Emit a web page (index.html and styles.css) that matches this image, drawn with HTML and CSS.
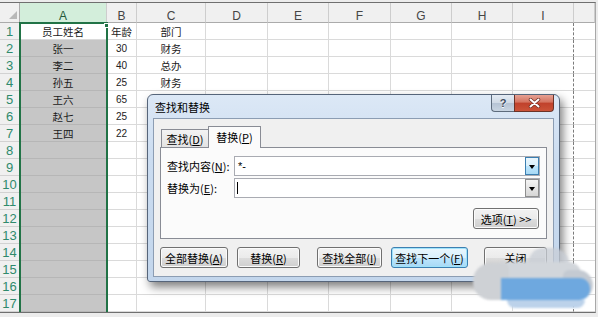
FILE: index.html
```html
<!DOCTYPE html>
<html lang="zh-CN">
<head>
<meta charset="utf-8">
<title>查找和替换</title>
<link rel="stylesheet" href="styles.css">
</head>
<body>
<div class="screen">
  <div class="sheet">
    <div class="grid">
      <div class="corner"><span class="tri"></span></div><div class="selh">A</div><div>B</div><div>C</div><div>D</div><div>E</div><div>F</div><div>G</div><div>H</div><div>I</div><div></div>
      <div>1</div><div>员工姓名</div><div>年龄</div><div>部门</div><div></div><div></div><div></div><div></div><div></div><div></div><div></div>
      <div>2</div><div>张一</div><div class="num">30</div><div>财务</div><div></div><div></div><div></div><div></div><div></div><div></div><div></div>
      <div>3</div><div>李二</div><div class="num">40</div><div>总办</div><div></div><div></div><div></div><div></div><div></div><div></div><div></div>
      <div>4</div><div>孙五</div><div class="num">25</div><div>财务</div><div></div><div></div><div></div><div></div><div></div><div></div><div></div>
      <div>5</div><div>王六</div><div class="num">65</div><div></div><div></div><div></div><div></div><div></div><div></div><div></div><div></div>
      <div>6</div><div>赵七</div><div class="num">25</div><div></div><div></div><div></div><div></div><div></div><div></div><div></div><div></div>
      <div>7</div><div>王四</div><div class="num">22</div><div></div><div></div><div></div><div></div><div></div><div></div><div></div><div></div>
      <div>8</div><div></div><div></div><div></div><div></div><div></div><div></div><div></div><div></div><div></div><div></div>
      <div>9</div><div></div><div></div><div></div><div></div><div></div><div></div><div></div><div></div><div></div><div></div>
      <div>10</div><div></div><div></div><div></div><div></div><div></div><div></div><div></div><div></div><div></div><div></div>
      <div>11</div><div></div><div></div><div></div><div></div><div></div><div></div><div></div><div></div><div></div><div></div>
      <div>12</div><div></div><div></div><div></div><div></div><div></div><div></div><div></div><div></div><div></div><div></div>
      <div>13</div><div></div><div></div><div></div><div></div><div></div><div></div><div></div><div></div><div></div><div></div>
      <div>14</div><div></div><div></div><div></div><div></div><div></div><div></div><div></div><div></div><div></div><div></div>
      <div>15</div><div></div><div></div><div></div><div></div><div></div><div></div><div></div><div></div><div></div><div></div>
      <div>16</div><div></div><div></div><div></div><div></div><div></div><div></div><div></div><div></div><div></div><div></div>
      <div>17</div><div></div><div></div><div></div><div></div><div></div><div></div><div></div><div></div><div></div><div></div>
    </div>
    <div class="selbox"><span class="handle"></span></div>

    <div class="dialog">
      <div class="titlebar">
        <div class="title">查找和替换</div>
        <div class="caps">
          <div class="cap help">?</div>
          <div class="cap close">
            <svg width="13" height="10" viewBox="0 0 13 10"><path d="M2.5 1.5 L10.5 8.5 M10.5 1.5 L2.5 8.5" stroke="#6b2a20" stroke-width="3.4" stroke-linecap="round"/><path d="M2.5 1.5 L10.5 8.5 M10.5 1.5 L2.5 8.5" stroke="#fff" stroke-width="2" stroke-linecap="round"/></svg>
          </div>
        </div>
      </div>
      <div class="panel">
        <div class="tabs">
          <div class="tab">查找(<u>D</u>)</div>
          <div class="tab active">替换(<u>P</u>)</div>
        </div>
        <div class="tabbody">
          <div class="field">
            <div class="label">查找内容(<u>N</u>):</div>
            <div class="combo"><span class="val">*-</span><span class="drop hot"><i></i></span></div>
          </div>
          <div class="field second">
            <div class="label">替换为(<u>E</u>):</div>
            <div class="combo"><span class="caret"></span><span class="drop"><i></i></span></div>
          </div>
          <div class="optrow"><div class="btn btn-opt">选项(<u>T</u>) &gt;&gt;</div></div>
        </div>
        <div class="actions">
          <div class="btn btn-all">全部替换(<u>A</u>)</div>
          <div class="btn btn-rep">替换(<u>R</u>)</div>
          <div class="btn btn-findall">查找全部(<u>I</u>)</div>
          <div class="btn btn-next">查找下一个(<u>F</u>)</div>
          <div class="btn btn-close">关闭</div>
        </div>
      </div>
    </div>
  </div>

  <div class="wm">
    <span class="wm-top"></span>
    <span class="wm-mid"></span>
    <span class="wm-left"></span>
    <span class="wm-right"></span>
    <span class="wm-blue"></span>
    <span class="wm-low"></span>
  </div>
</div>
</body>
</html>
```

FILE: styles.css
```css
html, body { margin: 0; padding: 0; }
body { width: 598px; height: 317px; overflow: hidden; background: #ececec; }

.screen {
  position: relative;
  width: 598px;
  height: 317px;
  padding-top: 2px;
  box-sizing: border-box;
  background: #ececec;
}

.sheet {
  position: relative;
  width: 596px;
  height: 311px;
  box-sizing: border-box;
  border-top: 1px solid #6f6f6f;
  border-right: 1px solid #a8a8a8;
  border-bottom: 1px solid #6f6f6f;
  background: #fff;
  overflow: hidden;
}

.grid {
  display: grid;
  grid-template-columns: 20px 87px 30px 69px 62px 61px 62px 61px 61px 61px 1fr;
  grid-template-rows: 20px repeat(17, 17px);
}

.grid > div {
  box-sizing: border-box;
  border-right: 1px solid #dadada;
  border-bottom: 1px solid #dadada;
  display: flex;
  align-items: center;
  justify-content: center;
  font: 10.5px "Noto Sans CJK SC", sans-serif;
  color: #1a1a1a;
  background: #fff;
  white-space: nowrap;
  overflow: hidden;
}
.grid > div.num {
  font: 10px "Liberation Sans", Arial, sans-serif;
  color: #222;
}

/* column headers */
.grid > div:nth-child(-n+11) {
  background: #f0f0f0;
  border-right: 1px solid #cdcdcd;
  border-bottom: 1px solid #ababab;
  font: 12px "Liberation Sans", Arial, sans-serif;
  color: #454545;
  align-items: flex-start;
  padding-top: 6px;
  line-height: 14px;
}
.grid > div.selh {
  background: #d3eedb;
  color: #25593a;
}
.grid > div.corner {
  align-items: flex-end;
  justify-content: flex-end;
  padding: 0 2px 3px 0;
  border-right: 1px solid #ababab;
}
.tri {
  width: 0;
  height: 0;
  border-left: 8px solid transparent;
  border-bottom: 8px solid #b8b8b8;
}

/* row numbers */
.grid > div:nth-child(11n+12) {
  background: #f0f0f0;
  border-right: 1px solid #ababab;
  border-bottom: 1px solid #d2d2d2;
  font: 13px "Liberation Sans", Arial, sans-serif;
  color: #2f8a6c;
}

/* selected column A (except active cell) */
.grid > div:nth-child(11n+24) {
  background: #c6c6c6;
  border-bottom-color: #b6b6b6;
  color: #1a1a1a;
}

/* page break line after column I */
.grid > div:nth-child(11n+21) {
  border-right: 1px dashed #7c7c7c;
}
.grid > div:nth-child(11n+22) { border-right: none; }

.selbox {
  position: absolute;
  left: 19px;
  top: 19px;
  width: 89px;
  height: 296px;
  box-sizing: border-box;
  border: 2px solid #217346;
}
.handle {
  position: absolute;
  right: -3px;
  top: -1px;
  width: 3px;
  height: 3px;
  background: #217346;
  border: 1px solid #fff;
}

/* dialog */
.dialog {
  position: absolute;
  left: 147px;
  top: 91px;
  width: 413px;
  height: 188px;
  box-sizing: border-box;
  border: 1px solid #56657a;
  border-radius: 6px 6px 3px 3px;
  background: linear-gradient(180deg, #dce8f6 0%, #cbdcf0 35%, #c3d6ec 100%);
  box-shadow: 3px 5px 10px rgba(0, 0, 0, 0.5);
  font: 11px "Noto Sans CJK SC", sans-serif;
  color: #000;
  display: flex;
  flex-direction: column;
}
.titlebar {
  display: flex;
  height: 23px;
}
.title {
  flex: 1;
  padding: 5px 0 0 7px;
  line-height: 14px;
}
.caps {
  display: flex;
  margin-right: 5px;
  height: 17px;
}
.cap {
  box-sizing: border-box;
  height: 17px;
  display: flex;
  align-items: center;
  justify-content: center;
  border: 1px solid #5d6b7c;
  border-top: none;
}
.help {
  width: 23px;
  border-radius: 0 0 0 4px;
  background: linear-gradient(180deg, #e4ebf3 0%, #cfd9e5 50%, #b5c3d4 51%, #c9d5e2 100%);
  font: bold 11px "Liberation Sans", Arial, sans-serif;
  color: #3e4c5e;
  text-shadow: 0 1px 0 #fff;
  border-right: none;
}
.close {
  width: 40px;
  border-radius: 0 0 4px 0;
  border-color: #6b3328;
  background: linear-gradient(180deg, #e7a193 0%, #d4735f 45%, #c0412b 50%, #cb5338 100%);
}

.panel {
  margin: 0 5px 4px 5px;
  height: 159px;
  box-sizing: border-box;
  border: 1px solid #8c9db3;
  background: #f0f0f0;
  padding: 7px 6px 8px 6px;
}
.tabs {
  display: flex;
  align-items: flex-end;
  height: 21px;
  padding-left: 1px;
}
.tab {
  box-sizing: border-box;
  width: 48px;
  height: 18px;
  border: 1px solid #898c95;
  border-bottom: none;
  background: linear-gradient(180deg, #f3f3f3, #e3e3e3);
  display: flex;
  align-items: center;
  justify-content: center;
  line-height: 14px;
}
.tab.active {
  position: relative;
  z-index: 1;
  width: 53px;
  height: 22px;
  margin-left: -1px;
  margin-bottom: -1px;
  background: #fbfbfb;
  padding-bottom: 2px;
}
.tabbody {
  box-sizing: border-box;
  width: 387px;
  height: 92px;
  border: 1px solid #898c95;
  background: #fbfbfb;
  padding: 8px 6px 0 6px;
}
.field {
  display: flex;
  align-items: center;
  height: 20px;
}
.field.second { margin-top: 2px; }
.label {
  width: 67px;
  flex: none;
  line-height: 14px;
}
.combo {
  flex: 1;
  height: 20px;
  box-sizing: border-box;
  border: 1px solid #a9abb2;
  background: #fff;
  display: flex;
  align-items: center;
}
.val {
  flex: 1;
  padding-left: 3px;
  font: 11px "Liberation Sans", Arial, sans-serif;
}
.caret {
  width: 1px;
  height: 12px;
  margin-left: 2px;
  background: #000;
  margin-right: auto;
}
.drop {
  box-sizing: border-box;
  width: 14px;
  height: 18px;
  border: 1px solid #8e8e8e;
  background: linear-gradient(180deg, #f4f4f4, #d6d6d6);
  display: flex;
  align-items: center;
  justify-content: center;
}
.drop.hot {
  border-color: #3c7fb1;
  background: linear-gradient(180deg, #eaf6fd 0%, #d9f0fc 50%, #bee6fd 51%, #a7d9f5 100%);
}
.drop i {
  width: 0;
  height: 0;
  border-left: 3.5px solid transparent;
  border-right: 3.5px solid transparent;
  border-top: 4px solid #000;
  margin-top: 1px;
}
.optrow {
  display: flex;
  justify-content: flex-end;
  margin-top: 10px;
  padding-right: 1px;
}

.btn {
  box-sizing: border-box;
  height: 21px;
  border: 1px solid #707070;
  border-radius: 3px;
  background: linear-gradient(180deg, #f2f2f2 0%, #ebebeb 50%, #dddddd 51%, #cfcfcf 100%);
  box-shadow: inset 0 0 0 1px #fbfbfb;
  display: flex;
  align-items: center;
  justify-content: center;
  line-height: 14px;
  white-space: nowrap;
}
.btn-opt { width: 66px; }

.actions {
  display: flex;
  margin-top: 8px;
}
.btn-all { width: 68px; }
.btn-rep { width: 63px; margin-left: 9px; }
.btn-findall { width: 65px; margin-left: 17px; }
.btn-next {
  width: 77px;
  margin-left: 9px;
  border-color: #3c7fb1;
  background: linear-gradient(180deg, #eaf6fd 0%, #d9f0fc 50%, #bee6fd 51%, #a7d9f5 100%);
  box-shadow: inset 0 0 0 1px #9fe3fb;
}
.btn-close { width: 63px; margin-left: 16px; }

/* blurred watermark in the corner */
.wm {
  position: absolute;
  left: 471px;
  top: 246px;
  width: 125px;
  height: 64px;
  filter: blur(1.2px);
}
.wm span { position: absolute; display: block; }
.wm-top {
  left: 58px; top: 2px; width: 40px; height: 20px;
  background: rgba(200, 206, 214, 0.75);
  border-radius: 14px 16px 0 0;
}
.wm-mid {
  left: 20px; top: 16px; width: 90px; height: 20px;
  background: #d2d6db;
  border-radius: 12px 12px 0 0;
}
.wm-left {
  left: 2px; top: 17px; width: 36px; height: 37px;
  background: #ced1d5;
  border-radius: 18px 6px 6px 18px;
}
.wm-right {
  left: 92px; top: 24px; width: 30px; height: 30px;
  background: #c4cad2;
  border-radius: 6px 15px 15px 6px;
}
.wm-blue {
  left: 30px; top: 32px; width: 89px; height: 22px;
  background: #6ea8df;
  border-radius: 0 10px 10px 0;
}
.wm-low {
  left: 36px; top: 54px; width: 78px; height: 8px;
  background: #bcd2ea;
  border-radius: 0 0 8px 8px;
}
```
